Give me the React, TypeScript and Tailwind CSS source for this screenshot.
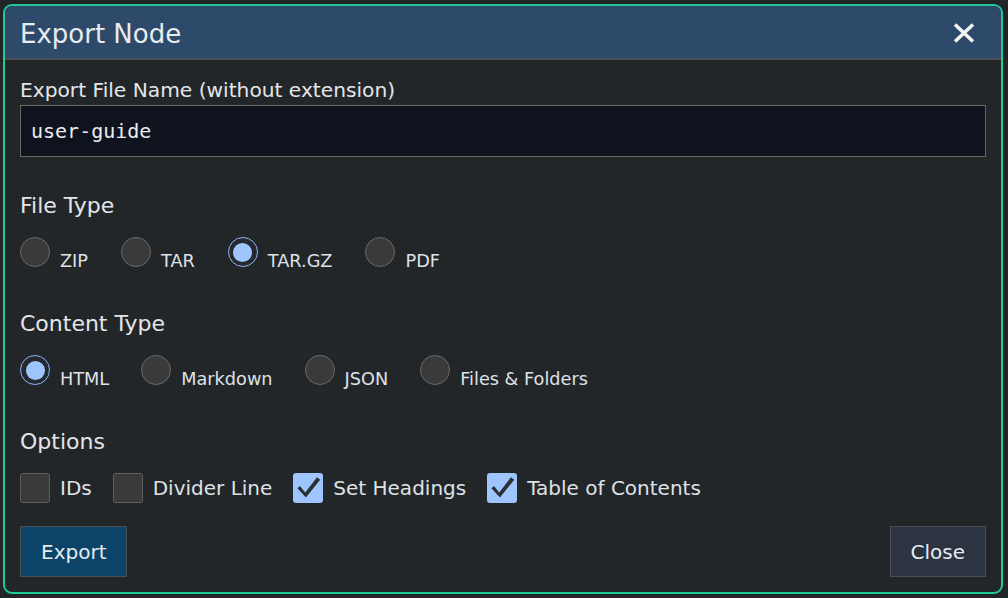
import { useState } from 'react'

const FILE_TYPES = ['ZIP', 'TAR', 'TAR.GZ', 'PDF']
const CONTENT_TYPES = ['HTML', 'Markdown', 'JSON', 'Files & Folders']

function Radio({ label, checked, onClick }: { label: string; checked: boolean; onClick: () => void }) {
  return (
    <div className="flex items-start cursor-pointer" onClick={onClick}>
      {checked ? (
        <span className="w-[30px] h-[30px] rounded-full border border-[#8ab6f6] bg-[#25292d] flex items-center justify-center">
          <span className="w-[19px] h-[19px] rounded-full bg-[#9ec5fe]" />
        </span>
      ) : (
        <span className="w-[30px] h-[30px] rounded-full border border-[#6a6a6a] bg-[#3a3a3a]" />
      )}
      <span className="ml-[10px] mt-[14px] text-[17.7px] leading-[20px] text-[#dee2e6]">{label}</span>
    </div>
  )
}

function Check({ label, checked, onClick }: { label: string; checked: boolean; onClick: () => void }) {
  return (
    <div className="flex items-center cursor-pointer" onClick={onClick}>
      {checked ? (
        <span className="w-[30px] h-[30px] rounded-[3px] bg-[#9ec5fe] flex items-center justify-center">
          <svg width="30" height="30" viewBox="0 0 30 30">
            <path d="M4.4 15.2 L7 12.9 L12.2 19.4 L24 4.2 L27.2 6.7 L12.9 24.6 Z" fill="#2c3035" />
          </svg>
        </span>
      ) : (
        <span className="w-[30px] h-[30px] rounded-[3px] border border-[#5f5f5f] bg-[#3a3a3a]" />
      )}
      <span className="ml-[10px] text-[20px] leading-[30px] text-[#dee2e6]">{label}</span>
    </div>
  )
}

export default function App() {
  const [name, setName] = useState('user-guide')
  const [fileType, setFileType] = useState('TAR.GZ')
  const [contentType, setContentType] = useState('HTML')
  const [opts, setOpts] = useState<Record<string, boolean>>({
    IDs: false,
    'Divider Line': false,
    'Set Headings': true,
    'Table of Contents': true,
  })

  return (
    <div className="w-[1008px] h-[598px] bg-[#222528] pt-[4px] pl-[3px] font-['DejaVu_Sans',sans-serif] overflow-hidden">
      <div className="w-[1000px] h-[590px] border-2 border-[#20c997] rounded-[9px] overflow-hidden bg-[#232629] flex flex-col">
        {/* Header */}
        <div className="h-[54px] shrink-0 bg-[#2e4a6b] border-b-2 border-[#4b5055] flex items-center justify-between pl-[15px] pr-[26px]">
          <h1 className="text-[26px] leading-none text-[#e9ecef] mt-[3px]">Export Node</h1>
          <svg width="22" height="20" viewBox="0 0 22 20" className="mt-[1px]">
            <path d="M2 1.5 L20 18.5 M20 1.5 L2 18.5" stroke="#f1f3f5" strokeWidth="3.6" />
          </svg>
        </div>

        {/* Body */}
        <div className="flex-1 flex flex-col px-[15px] pt-[15px] pb-[15px]">
          <label className="text-[20.2px] leading-[30px] text-[#e3e6e9]">Export File Name (without extension)</label>
          <input
            value={name}
            onChange={(e) => setName(e.target.value)}
            className="h-[52px] shrink-0 w-full border border-[#6c6660] bg-[#0f131d] px-[10px] font-['DejaVu_Sans_Mono',monospace] text-[20px] text-[#e9ecef] outline-none"
          />

          <h2 className="mt-[32px] text-[22px] leading-[33px] text-[#e3e6e9]">File Type</h2>
          <div className="mt-[15px] flex gap-x-[33px]">
            {FILE_TYPES.map((f) => (
              <Radio key={f} label={f} checked={fileType === f} onClick={() => setFileType(f)} />
            ))}
          </div>

          <h2 className="mt-[36px] text-[22px] leading-[33px] text-[#e3e6e9]">Content Type</h2>
          <div className="mt-[15px] flex gap-x-[32px]">
            {CONTENT_TYPES.map((c) => (
              <Radio key={c} label={c} checked={contentType === c} onClick={() => setContentType(c)} />
            ))}
          </div>

          <h2 className="mt-[36px] text-[22px] leading-[33px] text-[#e3e6e9]">Options</h2>
          <div className="mt-[15px] flex gap-x-[21px] h-[30px]">
            {Object.keys(opts).map((k) => (
              <Check key={k} label={k} checked={opts[k]} onClick={() => setOpts({ ...opts, [k]: !opts[k] })} />
            ))}
          </div>

          <div className="mt-[23px] flex justify-between">
            <button className="h-[51px] px-[20px] bg-[#0b4468] border border-[#4a4f55] text-[20px] text-[#e6ebf0]">Export</button>
            <button className="h-[51px] px-[20px] bg-[#2d3441] border border-[#4a4f55] text-[20px] text-[#e6ebf0]">Close</button>
          </div>
        </div>
      </div>
    </div>
  )
}
